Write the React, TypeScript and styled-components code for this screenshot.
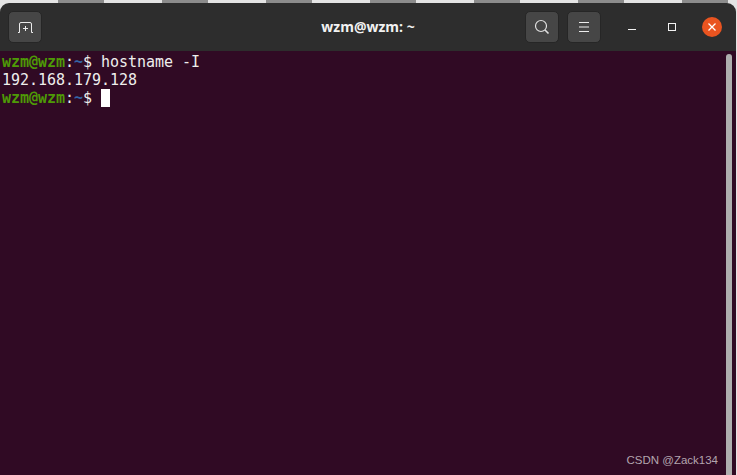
import React from 'react'
import styled, { createGlobalStyle } from 'styled-components'

const GlobalStyle = createGlobalStyle`
  html, body {
    margin: 0;
    padding: 0;
    background: #ffffff;
  }
`

const Page = styled.div`
  position: relative;
  width: 737px;
  height: 475px;
  overflow: hidden;
  background: #e4e4e4;
`

const DesktopStrip = styled.div`
  display: flex;
  height: 3px;
  padding-left: 58px;
  gap: 58px;
`

const StripTab = styled.div`
  flex: none;
  width: 46px;
  height: 3px;
  background: #8c8c8c;
`

const Terminal = styled.div`
  display: flex;
  flex-direction: column;
  width: 736px;
  height: 472px;
  border-radius: 9px 9px 0 0;
  overflow: hidden;
`

const HeaderBar = styled.header`
  position: relative;
  display: flex;
  align-items: center;
  flex: none;
  height: 48px;
  padding: 0 8px;
  background: #2d2d2d;
`

const Title = styled.div`
  position: absolute;
  left: 0;
  right: 0;
  top: 15px;
  text-align: center;
  color: #f2f2f2;
  font: bold 14px/18px "Open Sans", "Noto Sans", sans-serif;
`

const HeaderButton = styled.button`
  display: flex;
  align-items: center;
  justify-content: center;
  width: 34px;
  height: 32px;
  padding: 0;
  border: 1px solid #262626;
  border-radius: 5px;
  background: #464646;
`

const RightGroup = styled.div`
  display: flex;
  align-items: center;
  margin-left: auto;
  margin-right: 6px;
`

const MenuButton = styled(HeaderButton)`
  margin-left: 8px;
`

const WindowControl = styled.div<{ $gap: number }>`
  display: flex;
  align-items: center;
  justify-content: center;
  width: 20px;
  height: 20px;
  margin-left: ${(p) => p.$gap}px;
`

const CloseControl = styled(WindowControl)`
  border-radius: 50%;
  background: #e95420;
`

const Body = styled.main`
  position: relative;
  display: flex;
  flex: 1;
  min-height: 0;
  background: #300a24;
`

const Screen = styled.pre`
  flex: 1;
  margin: 0;
  padding: 2px 0 0 2px;
  color: #eeeeec;
  letter-spacing: -0.03px;
  font: 15px/18px "DejaVu Sans Mono", monospace;
`

const Green = styled.span`
  color: #4e9a06;
  font-weight: bold;
`

const Blue = styled.span`
  color: #3465a4;
  font-weight: bold;
`

const Cursor = styled.span`
  display: inline-block;
  width: 9px;
  height: 18px;
  vertical-align: -4px;
  background: #ffffff;
`

const ScrollTrack = styled.div`
  flex: none;
  box-sizing: border-box;
  width: 10px;
  padding: 3px 4px 0 0;
`

const ScrollThumb = styled.div`
  height: 100%;
  border-radius: 3px 3px 0 0;
  background: #aeaeae;
`

const Watermark = styled.div`
  position: absolute;
  right: 18px;
  bottom: 7px;
  color: #b3a5ae;
  font: 11.5px/16px "Liberation Sans", Arial, sans-serif;
`

const Prompt = () => (
  <>
    <Green>wzm@wzm</Green>:<Blue>~</Blue>$
  </>
)

const App = () => {
  return (
    <Page>
      <GlobalStyle />
      <DesktopStrip>
        <StripTab />
        <StripTab />
        <StripTab />
        <StripTab />
        <StripTab />
        <StripTab />
        <StripTab />
      </DesktopStrip>
      <Terminal>
        <HeaderBar>
          <HeaderButton aria-label="New tab">
            <svg width="18" height="14" viewBox="0 0 18 14" fill="none" stroke="#ececec" strokeWidth="1">
              <path d="M2 12.500h1.500V4Q3.500 2.500 5 2.500h9q1.500 0 1.500 1.500v8.500H17" />
              <path d="M9.500 6v5M7 8.500h5" />
            </svg>
          </HeaderButton>
          <Title>wzm@wzm: ~</Title>
          <RightGroup>
            <HeaderButton aria-label="Search">
              <svg width="16" height="16" viewBox="0 0 16 16" fill="none" stroke="#e0e0e0">
                <circle cx="7" cy="7" r="5.500" strokeWidth="1.200" />
                <path d="M11 11l3.500 3.500" strokeWidth="1.600" />
              </svg>
            </HeaderButton>
            <MenuButton aria-label="Menu">
              <svg width="12" height="10" viewBox="0 0 12 10" stroke="#ececec" strokeWidth="1">
                <path d="M1 .5h10M1 5h10M1 9.500h10" />
              </svg>
            </MenuButton>
            <WindowControl $gap={21}>
              <svg width="10" height="10" viewBox="0 0 10 10" stroke="#f2f2f2" strokeWidth="1">
                <path d="M1 7.500h8" />
              </svg>
            </WindowControl>
            <WindowControl $gap={20}>
              <svg width="10" height="10" viewBox="0 0 10 10" fill="none" stroke="#f2f2f2" strokeWidth="1">
                <rect x="1.500" y="1.500" width="7" height="7" />
              </svg>
            </WindowControl>
            <CloseControl $gap={20}>
              <svg width="10" height="10" viewBox="0 0 10 10" stroke="#ffffff" strokeWidth="1.300">
                <path d="M1.500 1.500l7 7M8.500 1.500l-7 7" />
              </svg>
            </CloseControl>
          </RightGroup>
        </HeaderBar>
        <Body>
          <Screen>
            <Prompt /> hostname -I
            {'\n'}192.168.179.128
            {'\n'}
            <Prompt /> <Cursor />
          </Screen>
          <ScrollTrack>
            <ScrollThumb />
          </ScrollTrack>
          <Watermark>CSDN @Zack134</Watermark>
        </Body>
      </Terminal>
    </Page>
  )
}

export default App
